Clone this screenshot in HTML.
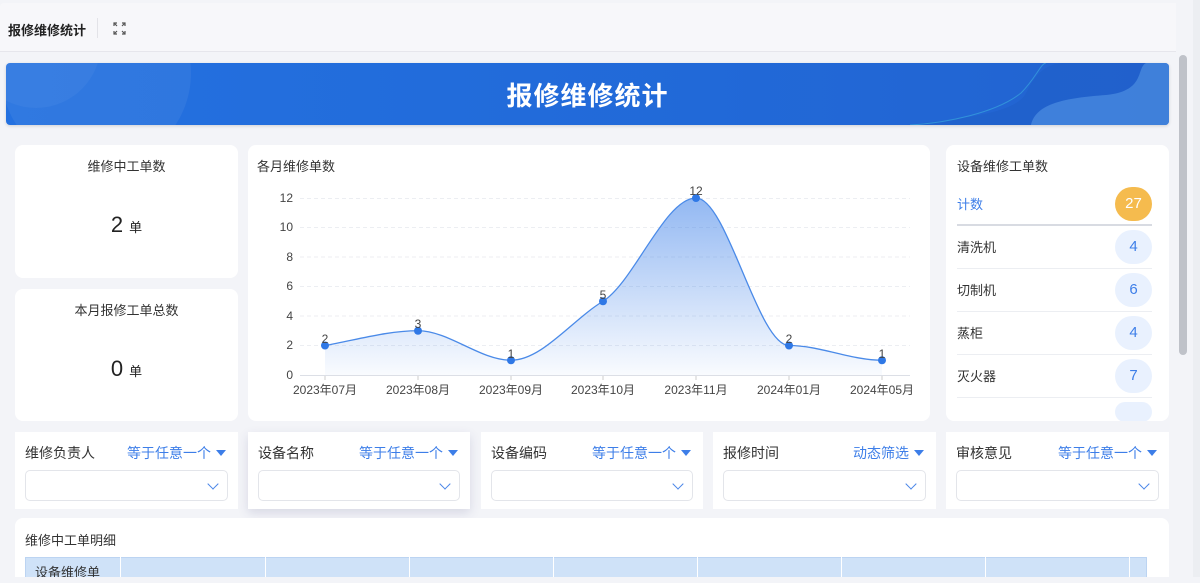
<!DOCTYPE html>
<html style="overflow:hidden;width:1200px;height:583px"><head><meta charset="utf-8"><style>
*{box-sizing:border-box;margin:0;padding:0}
body{width:1200px;height:583px;overflow:hidden;background:#f3f4f8;font-family:"Liberation Sans","Noto Sans CJK SC",sans-serif;color:#333;position:relative}
.abs{position:absolute}
.card{position:absolute;background:#fff;border-radius:8px}
.top{left:0;top:3px;width:1186px;height:49px;background:#f7f7fa;border-bottom:1px solid #e6e6ec;border-radius:4px 4px 0 0}
.banner{left:6px;top:63px;width:1163px;height:62px;border-radius:4px;background:linear-gradient(90deg,#2471e0,#2169d8 60%,#2363d0);overflow:hidden;box-shadow:0 1px 3px rgba(0,0,0,.15)}
.ctit{font-size:13px;color:#333}
.badge{position:absolute;right:17px;width:37px;height:34px;border-radius:17px;background:#e9f1fe;color:#3d7ee8;font-size:15px;text-align:center;line-height:34px}
.row{position:absolute;left:11px;right:17px;height:43px;border-bottom:1px solid #eceef2;font-size:13px;line-height:43px}
.flt{position:absolute;top:432px;height:77px;background:#fff}
.flt .l{position:absolute;left:10px;top:11px;font-size:14px;color:#333}
.flt .r{position:absolute;right:12px;top:11px;font-size:14px;color:#3d7ee8}
.flt .box{position:absolute;left:10px;right:10px;top:38px;height:31px;border:1px solid #e3e5ea;border-radius:5px}
.tri{display:inline-block;width:0;height:0;border-left:5px solid transparent;border-right:5px solid transparent;border-top:6px solid #3d7ee8;margin-left:5px;vertical-align:2px}
.chev{position:absolute;right:10px;top:9px;width:8px;height:8px;border-right:1.5px solid #4a86e8;border-bottom:1.5px solid #4a86e8;transform:rotate(45deg)}
</style></head><body>
<div class="abs top"></div>
<div class="abs" style="left:8px;top:20px;font-size:13px;font-weight:bold;color:#222">报修维修统计</div>
<div class="abs" style="left:97px;top:18px;width:1px;height:20px;background:#e3e3e8"></div>
<svg class="abs" style="left:113px;top:22px" width="13" height="13" viewBox="0 0 13 13" fill="none" stroke="#555" stroke-width="1.2"><path d="M1 4V1h3M1 1l3 3M12 4V1H9M12 1L9 4M1 9v3h3M1 12l3-3M12 9v3H9M12 12L9 9"/></svg>
<div class="abs" style="left:1176px;top:0;width:24px;height:583px;background:#f3f4f8"></div>
<div class="abs" style="left:1179px;top:55px;width:8px;height:300px;border-radius:4px;background:#bfc2c9"></div>
<div class="abs" style="left:1193px;top:0;width:7px;height:583px;background:#eceef2"></div>
<div class="abs banner">
<svg width="1163" height="62" style="position:absolute;left:0;top:0">
<circle cx="90" cy="10" r="95" fill="#fff" opacity=".06"/>
<circle cx="30" cy="-20" r="65" fill="#fff" opacity=".04"/>
<path d="M900 62 C960 55 1010 50 1020 30 C1030 10 1040 0 1060 0 L1163 0 L1163 62Z" fill="#1f5fc8" opacity=".6"/>
<path d="M904 62 C940 60 990 50 1015 30 C1030 15 1035 0 1040 0" stroke="#3cb0e0" stroke-width="1" fill="none" opacity=".6"/>
<path d="M1025 62 C1030 40 1060 35 1100 32 C1140 28 1130 5 1140 0 L1163 0 L1163 62Z" fill="#5a9ae8" opacity=".55"/>
</svg>
<div style="position:absolute;left:0;right:0;top:13px;text-align:center;color:#fff;font-size:26px;font-weight:bold;letter-spacing:1px">报修维修统计</div>
</div>
<div class="card" style="left:15px;top:145px;width:223px;height:133px">
<div class="ctit" style="text-align:center;margin-top:11px">维修中工单数</div>
<div style="text-align:center;margin-top:37px;font-size:22px;color:#222">2 <span style="font-size:13px">单</span></div></div>
<div class="card" style="left:15px;top:289px;width:223px;height:132px">
<div class="ctit" style="text-align:center;margin-top:11px">本月报修工单总数</div>
<div style="text-align:center;margin-top:37px;font-size:22px;color:#222">0 <span style="font-size:13px">单</span></div></div>
<div class="card" style="left:248px;top:145px;width:682px;height:276px">
<div class="ctit" style="position:absolute;left:9px;top:11px">各月维修单数</div></div>
<svg class="abs" style="left:0;top:0" width="940" height="420" font-family="Liberation Sans,sans-serif" font-size="12">
<defs><linearGradient id="g" x1="0" y1="0" x2="0" y2="1"><stop offset="0" stop-color="#3a7ee8" stop-opacity=".55"/><stop offset="1" stop-color="#3a7ee8" stop-opacity=".03"/></linearGradient></defs>
<g stroke="#eceef2" stroke-dasharray="4 3"><path d="M300 198.5H910M300 227.5H910M300 257H910M300 286.5H910M300 316H910M300 345.5H910"/></g>
<path d="M300 375.5H910" stroke="#dcdfe6"/>
<g fill="#444" text-anchor="end"><text x="293" y="202">12</text><text x="293" y="231">10</text><text x="293" y="261">8</text><text x="293" y="290">6</text><text x="293" y="320">4</text><text x="293" y="349">2</text><text x="293" y="379">0</text></g>
<path d="M325,345.5 C356,340 387,330.75 418,330.75 C449,330.75 480,360.25 511,360.25 C542,360.25 572,320 603,301.25 C634,282 665,198 696,198 C727,198 758,345.5 789,345.5 C820,345.5 851,360.25 882,360.25 L882 375 L325 375Z" fill="url(#g)"/>
<path d="M325,345.5 C356,340 387,330.75 418,330.75 C449,330.75 480,360.25 511,360.25 C542,360.25 572,320 603,301.25 C634,282 665,198 696,198 C727,198 758,345.5 789,345.5 C820,345.5 851,360.25 882,360.25" fill="none" stroke="#4a8ae8" stroke-width="1.3"/>
<g fill="#2f78e6"><circle cx="325" cy="345.5" r="4"/><circle cx="418" cy="330.75" r="4"/><circle cx="511" cy="360.25" r="4"/><circle cx="603" cy="301.25" r="4"/><circle cx="696" cy="198" r="4"/><circle cx="789" cy="345.5" r="4"/><circle cx="882" cy="360.25" r="4"/></g>
<g fill="#444" text-anchor="middle"><text x="325" y="343">2</text><text x="418" y="328">3</text><text x="511" y="358">1</text><text x="603" y="299">5</text><text x="696" y="195">12</text><text x="789" y="343">2</text><text x="882" y="358">1</text>
<text x="325" y="394">2023年07月</text><text x="418" y="394">2023年08月</text><text x="511" y="394">2023年09月</text><text x="603" y="394">2023年10月</text><text x="696" y="394">2023年11月</text><text x="789" y="394">2024年01月</text><text x="882" y="394">2024年05月</text></g>
<g stroke="#ccc"><path d="M325 376v4M418 376v4M511 376v4M603 376v4M696 376v4M789 376v4M882 376v4"/></g>
</svg>
<div class="card" style="left:946px;top:145px;width:223px;height:276px;overflow:hidden">
<div class="ctit" style="position:absolute;left:11px;top:11px">设备维修工单数</div>
<div class="row" style="top:38px;border-bottom:2px solid #d8dbe2;color:#3d7ee8">计数<div class="badge" style="right:0;top:4px;background:#f5bb4e;color:#fff">27</div></div>
<div class="row" style="top:81px">清洗机<div class="badge" style="right:0;top:4px">4</div></div>
<div class="row" style="top:124px">切制机<div class="badge" style="right:0;top:4px">6</div></div>
<div class="row" style="top:167px">蒸柜<div class="badge" style="right:0;top:4px">4</div></div>
<div class="row" style="top:210px">灭火器<div class="badge" style="right:0;top:4px">7</div></div>
<div class="badge" style="right:17px;top:257px;height:20px"></div>
</div>
<div class="flt" style="left:15px;width:223px"><div class="l">维修负责人</div><div class="r">等于任意一个<span class="tri"></span></div><div class="box"><div class="chev"></div></div></div>
<div class="flt" style="left:248px;width:222px;box-shadow:0 4px 10px rgba(60,60,120,.15)"><div class="l">设备名称</div><div class="r">等于任意一个<span class="tri"></span></div><div class="box"><div class="chev"></div></div></div>
<div class="flt" style="left:481px;width:222px"><div class="l">设备编码</div><div class="r">等于任意一个<span class="tri"></span></div><div class="box"><div class="chev"></div></div></div>
<div class="flt" style="left:713px;width:223px"><div class="l">报修时间</div><div class="r">动态筛选<span class="tri"></span></div><div class="box"><div class="chev"></div></div></div>
<div class="flt" style="left:946px;width:223px"><div class="l">审核意见</div><div class="r">等于任意一个<span class="tri"></span></div><div class="box"><div class="chev"></div></div></div>
<div class="card" style="left:15px;top:518px;width:1154px;height:80px">
<div class="ctit" style="position:absolute;left:10px;top:12px">维修中工单明细</div>
<div style="position:absolute;left:10px;top:39px;width:1122px;height:30px;background:#cfe2f8;border:1px solid #bcd4f2"></div>
<div style="position:absolute;left:20px;top:44px;font-size:13px;color:#333">设备维修单</div>
<div style="position:absolute;left:105px;top:39px;width:1px;height:30px;background:#fff"></div>
<div style="position:absolute;left:250px;top:39px;width:1px;height:30px;background:#fff"></div>
<div style="position:absolute;left:394px;top:39px;width:1px;height:30px;background:#fff"></div>
<div style="position:absolute;left:538px;top:39px;width:1px;height:30px;background:#fff"></div>
<div style="position:absolute;left:682px;top:39px;width:1px;height:30px;background:#fff"></div>
<div style="position:absolute;left:826px;top:39px;width:1px;height:30px;background:#fff"></div>
<div style="position:absolute;left:970px;top:39px;width:1px;height:30px;background:#fff"></div>
<div style="position:absolute;left:1114px;top:39px;width:1px;height:30px;background:#fff"></div>
</div>
<div class="abs" style="left:0;top:577px;width:1200px;height:6px;background:#f3f4f8"></div>
</body></html>
